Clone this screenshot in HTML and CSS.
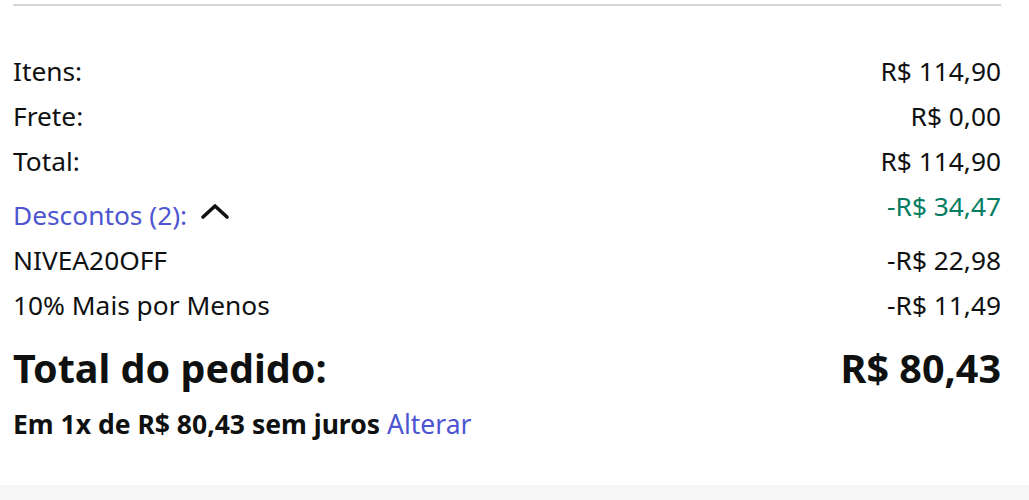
FILE: index.html
```html
<!DOCTYPE html>
<html lang="pt-BR">
<head>
<meta charset="utf-8">
<link rel="stylesheet" href="styles.css">
</head>
<body>
<div class="panel">
  <hr class="divider">
  <div class="rows">
    <div class="row"><span>Itens:</span><span>R$ 114,90</span></div>
    <div class="row"><span>Frete:</span><span>R$ 0,00</span></div>
    <div class="row"><span>Total:</span><span>R$ 114,90</span></div>
    <div class="row discount">
      <span class="link label">Descontos (2):
        <svg class="chev" width="30" height="18" viewBox="0 0 30 18"><path d="M3 14 L15 3 L27 14" fill="none" stroke="#111" stroke-width="3.6" stroke-linecap="round" stroke-linejoin="round"/></svg>
      </span>
      <span class="green">-R$ 34,47</span>
    </div>
    <div class="row"><span>NIVEA20OFF</span><span>-R$ 22,98</span></div>
    <div class="row"><span>10% Mais por Menos</span><span>-R$ 11,49</span></div>
  </div>
  <div class="grand"><span>Total do pedido:</span><span>R$ 80,43</span></div>
  <p class="install">Em 1x de R$ 80,43 sem juros <a class="link">Alterar</a></p>
</div>
<div class="footer"></div>
</body>
</html>
```
FILE: styles.css
```css
html, body { margin: 0; padding: 0; background: #fff; }
body { font-family: "Noto Sans", "Open Sans", sans-serif; color: #0f1111; width: 1029px; height: 500px; overflow: hidden; }
.panel { padding: 4px 28px 0 13px; height: 485px; box-sizing: border-box; }
.divider { border: 0; height: 2px; background: #d5d9d9; margin: 0; }
.rows { margin-top: 43px; display: flex; flex-direction: column; }
.row { display: flex; justify-content: space-between; align-items: flex-start; font-size: 26.3px; line-height: 45px; height: 45px; }
.row.discount { height: 54px; }
.label { display: flex; align-items: center; gap: 13px; margin-top: 9px; }
.link { color: #4d55d1; text-decoration: none; }
.green { color: #067d62; }
.chev { display: block; margin-top: -8px; }
.grand { display: flex; justify-content: space-between; font-weight: 700; font-size: 39.5px; margin-top: 12px; line-height: 56px; }
.install { margin: 11px 0 0; font-size: 26.5px; font-weight: 700; line-height: 34px; }
.install .link { font-weight: 400; }
.footer { height: 15px; background: #f7f7f7; }
```
